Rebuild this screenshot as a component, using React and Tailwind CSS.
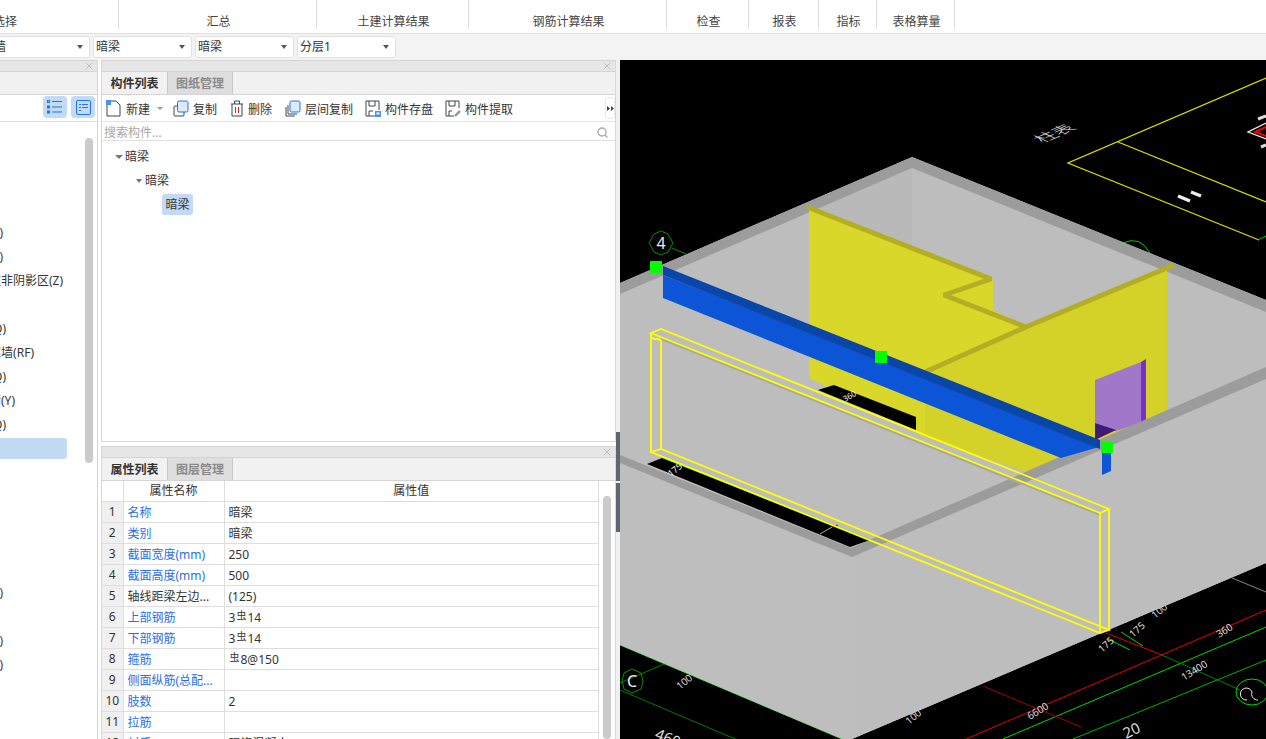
import React from "react";
import { X } from "lucide-react";

const ribbon = [
  { label: "选择", w: "w-[119px]", clip: true },
  { label: "汇总", w: "w-[198px]" },
  { label: "土建计算结果", w: "w-[152px]" },
  { label: "钢筋计算结果", w: "w-[198px]" },
  { label: "检查", w: "w-[82px]" },
  { label: "报表", w: "w-[70px]" },
  { label: "指标", w: "w-[58px]" },
  { label: "表格算量", w: "w-[78px]" },
];

const leftRows = [
  { text: "", w: "w-0" },
  { text: "", w: "w-0" },
  { text: "", w: "w-0" },
  { text: "剪力墙(Q)", w: "w-[3px]" },
  { text: "人防门框墙(J)", w: "w-[3px]" },
  { text: "暗柱非阴影区(Z)", w: "w-[63px]" },
  { text: "", w: "w-0" },
  { text: "砌体墙(Q)", w: "w-[6px]" },
  { text: "人防门框墙(RF)", w: "w-[34px]" },
  { text: "砌块墙(Q)", w: "w-[6px]" },
  { text: "预制墙(Y)", w: "w-[15px]" },
  { text: "保温墙(Q)", w: "w-[6px]" },
  { text: "", w: "w-0", selected: true },
  { text: "", w: "w-0" },
  { text: "", w: "w-0" },
  { text: "", w: "w-0" },
  { text: "", w: "w-0" },
  { text: "", w: "w-0" },
  { text: "过梁(G)", w: "w-[3px]" },
  { text: "", w: "w-0" },
  { text: "连梁(G)", w: "w-[3px]" },
  { text: "圈梁(B)", w: "w-[3px]" },
];

const propRows = [
  { no: 1, name: "名称", value: "暗梁", blue: true },
  { no: 2, name: "类别", value: "暗梁", blue: true },
  { no: 3, name: "截面宽度(mm)", value: "250", blue: true },
  { no: 4, name: "截面高度(mm)", value: "500", blue: true },
  { no: 5, name: "轴线距梁左边...", value: "(125)" },
  { no: 6, name: "上部钢筋", value: "3虫14", blue: true },
  { no: 7, name: "下部钢筋", value: "3虫14", blue: true },
  { no: 8, name: "箍筋", value: "虫8@150", blue: true },
  { no: 9, name: "侧面纵筋(总配...", value: "", blue: true },
  { no: 10, name: "肢数", value: "2", blue: true },
  { no: 11, name: "拉筋", value: "", blue: true },
  { no: 12, name: "材质", value: "现浇混凝土", blue: true },
];

// value text with the rebar mark lifted a little
function RebarValue({ value }) {
  const parts = value.split("虫");
  if (parts.length === 1) return value;
  return (
    <>
      {parts[0]}
      <span className="relative -top-[3px] mx-[1px] text-[10px]">虫</span>
      {parts[1]}
    </>
  );
}

function PanelHeader() {
  return (
    <div className="flex h-[12px] shrink-0 items-center justify-end border-y border-[#d4d4d4] bg-[#e6e6e6] pr-[2px]">
      <X size={12} strokeWidth={1} className="text-[#9a9a9a]" />
    </div>
  );
}

function Tabs({ first, second }) {
  return (
    <div className="flex h-[23px] shrink-0 border-b border-[#d4d4d4] bg-[#f1f1f1]">
      <div className="flex w-[65px] items-center justify-center pt-[2px] font-bold text-[#333]">{first}</div>
      <div className="flex w-[66px] items-center justify-center border-x border-[#c8c8c8] bg-[#dedede] pt-[2px] font-bold text-[#8a8a8a]">
        {second}
      </div>
    </div>
  );
}

function Dropdown({ text, w }) {
  return (
    <div className={`flex h-[22px] items-center justify-between overflow-hidden rounded-[3px] border border-[#e2e2e2] bg-white pl-[2px] pr-[6px] ${w}`}>
      <span className="whitespace-nowrap text-[#333]">{text}</span>
      <span className="h-0 w-0 border-x-[3px] border-t-[4px] border-x-transparent border-t-[#555]" />
    </div>
  );
}

function ToolButton({ icon, label, className }) {
  return (
    <div className={`flex items-center gap-[4px] ${className}`}>
      {icon}
      <span className="whitespace-nowrap pt-[3px] text-[#333]">{label}</span>
    </div>
  );
}

const NewIcon = (
  <svg width="16" height="17" viewBox="0 0 16 17" fill="none">
    <path d="M1 5v11h13V5l-4-4H5" stroke="#3d4654" strokeWidth="1" />
    <rect x="0" y="0" width="5" height="5" fill="#4d90ea" />
  </svg>
);
const CopyIcon = (
  <svg width="16" height="17" viewBox="0 0 16 17" fill="none">
    <rect x="1" y="6" width="10" height="10" rx="1" fill="#fff" stroke="#3d4654" />
    <rect x="4.5" y="1" width="10.5" height="11" rx="1.5" fill="#dceafc" stroke="#1f74e8" />
  </svg>
);
const DeleteIcon = (
  <svg width="14" height="17" viewBox="0 0 14 17" fill="none">
    <path d="M1 4h12M2 4v12h10V4M4.5 4V1h5v3" stroke="#3d4654" />
    <path d="M5.5 7v6M8.5 7v6" stroke="#e0241c" />
  </svg>
);
const FloorCopyIcon = (
  <svg width="16" height="17" viewBox="0 0 16 17" fill="none">
    <path d="M1 7v9h9M3 5v9h9" stroke="#3d4654" />
    <rect x="5" y="1" width="10" height="11" rx="1.5" fill="#dceafc" stroke="#1f74e8" />
  </svg>
);
const SaveIcon = (
  <svg width="16" height="17" viewBox="0 0 16 17" fill="none">
    <path d="M10 16H1V1h13v9" stroke="#3d4654" />
    <path d="M4 1v5h6V1M4 16v-5h4" stroke="#3d4654" />
    <rect x="10" y="11" width="6" height="6" fill="#4d90ea" />
    <rect x="11.5" y="12.5" width="3" height="2" fill="#fff" />
  </svg>
);
const PickIcon = (
  <svg width="16" height="17" viewBox="0 0 16 17" fill="none">
    <path d="M9 16H1V1h13v7" stroke="#3d4654" />
    <path d="M4 1v5h6V1M4 16v-5h3" stroke="#3d4654" />
    <path d="M10 16l5-5" stroke="#8a94a3" strokeWidth="2.4" />
  </svg>
);

// CAD view, drawn in page coordinates
function CadView() {
  return (
    <svg viewBox="620 60 646 679" className="block h-[679px] w-[646px]">
      <rect x="620" y="60" width="646" height="679" fill="#000" />

      {/* drawing lines behind the model, top right */}
      <g fill="none" stroke="#dcdc00" strokeWidth="1.3">
        <path d="M1266 78L1068 163L1259 240" />
        <path d="M1118 142L1266 202" />
      </g>
      <path d="M1258 240L1266 236" stroke="#0c0" fill="none" />
      <path d="M1266 123L1248 132L1266 139" stroke="#eee" strokeWidth="1.3" fill="none" />
      <path d="M1266 127L1255 132L1266 136" stroke="#e00" strokeWidth="2" fill="none" />
      <path d="M1258 119l8 -3M1261 147l5 -2" stroke="#ddd" strokeWidth="3" fill="none" />
      <text transform="matrix(0.9 -0.38 0.8 0.36 1043 143)" fill="#eee" fontSize="19" fontWeight="200">柱表</text>
      <path d="M1178 196l12 5M1191 192l10 4" stroke="#eee" strokeWidth="3.5" fill="none" />
      <path d="M1123 243Q1140 235 1150 253" stroke="#0c0" fill="none" />
      <path d="M672 248L686 254" stroke="#0a8a0a" fill="none" />
      <polygon points="661,231 668,234 673,243 668,252 661,255 654,252 649,243 654,234" fill="none" stroke="#0a8a0a" />
      <text x="661" y="249" textAnchor="middle" fill="#eee" fontSize="16">4</text>

      {/* CAD below the model */}
      <g fill="none">
        <path d="M966 739L1266 610" stroke="#e60000" />
        <path d="M1003 739L1266 627" stroke="#00d800" />
        <path d="M1073 739L1266 660" stroke="#00b000" />
        <path d="M983 686L1081 727" stroke="#a00000" />
        <path d="M1106 633L1162 655" stroke="#e60000" />
        <path d="M1121 632L1143 646M1108 639L1130 650" stroke="#00d800" />
        <path d="M1162 655L1240 690" stroke="#008000" />
        <path d="M620 645L842 739" stroke="#00e000" />
        <path d="M620 690L735 739" stroke="#007a00" />
        <path d="M620 683L664 664" stroke="#008000" />
        <path d="M1232 578L1266 592" stroke="#888" />
        <ellipse cx="1252" cy="692" rx="16" ry="13" stroke="#00d800" />
      </g>
      <polygon points="632,669 641,673 643,681 641,689 632,693 624,689 622,681 624,673" fill="none" stroke="#0a8a0a" />
      <text x="632" y="687" textAnchor="middle" fill="#eee" fontSize="16">C</text>
      <g fill="#ddd" fontSize="10">
        <text transform="translate(1102 653) rotate(-42)">175</text>
        <text transform="translate(1133 638) rotate(-42)">175</text>
        <text transform="translate(1219 638) rotate(-32)">360</text>
        <text transform="translate(1184 681) rotate(-32)">13400</text>
        <text transform="translate(1030 720) rotate(-32)">6600</text>
        <text transform="translate(680 690) rotate(-40)">100</text>
        <text transform="translate(909 725) rotate(-40)">100</text>
        <text transform="translate(1155 619) rotate(-40)">100</text>
      </g>
      <text transform="translate(654 738) rotate(22)" fill="#ddd" fontSize="15">4600</text>
      <text transform="translate(1126 739) rotate(-25)" fill="#ddd" fontSize="15">20</text>
      <path d="M1247 700a6 6 0 1 1 5 -8a6 6 0 0 0 6 8" stroke="#eee" fill="none" />

      {/* model body */}
      <polygon points="912,157 1266,300 1266,563 852,739 842,739 620,645 620,283" fill="#bebebe" />
      <polygon points="912,168 620,294 620,453 851,548 851,739 852,739 1266,563 1266,312" fill="#bdbdbd" />
      <polygon points="912,168 809,212 809,330 912,300" fill="#b9b9b9" />
      <polygon points="912,157 1266,300 1266,312 912,168 620,294 620,283" fill="#9c9c9c" />

      {/* yellow walls */}
      <polygon points="809,207 993,279 993,310 1026,327 1026,400 925,437 916,432 809,378" fill="#d9d72a" />
      <polygon points="1026,327 1167,266 1167,420 1036,475 925,437 925,372" fill="#d4d228" />
      <g fill="none" stroke="#b3ae22" strokeWidth="5" strokeLinejoin="bevel">
        <path d="M807 207L991 279L944 295L1026 327L1174 265" />
        <path d="M1026 327L925 372" />
      </g>

      {/* door */}
      <polygon points="1095,380 1141,362 1141,423 1116,431 1095,423" fill="#a077c9" />
      <polygon points="1141,362 1146,359 1146,422 1141,423" fill="#7a2fc8" />
      <polygon points="1095,423 1116,430 1095,440" fill="#3f1a78" />

      {/* black slot under the beam */}
      <polygon points="818,390 834,385 916,417 916,430" fill="#000" />
      <text transform="translate(845 402) rotate(-30)" fill="#eee" fontSize="8">360</text>

      {/* front wall band with its slot */}
      <polygon points="620,455 851,548 1266,367 1266,379 852,557 620,463" fill="#9c9c9c" />
      <polygon points="647,464 662,458 870,540 850,547" fill="#000" />
      <path d="M662 457L870 540" stroke="#00e000" strokeWidth="1.4" fill="none" />
      <path d="M820 534L832 527" stroke="#aaa" fill="none" />
      <path d="M832 527L838 525" stroke="#c00" fill="none" />
      <text transform="translate(671 477) rotate(-40)" fill="#eee" fontSize="9">175</text>

      {/* beam */}
      <polygon points="663,275 1099,447 1061,458 663,298" fill="#0b55d6" />
      <polygon points="663,266 1100,440 1100,449 663,275" fill="#0a45a8" />
      <polygon points="1102,453 1111,453 1111,471 1102,475" fill="#0b55d6" />
      <rect x="650" y="261" width="12" height="12" fill="#00ff00" />
      <rect x="875" y="351" width="12" height="12" fill="#00ff00" />
      <rect x="1101" y="442" width="12" height="11" fill="#00ff00" />

      {/* selected wireframe */}
      <polygon points="661,336 1100,513 1100,516 661,340" fill="#a8a8a8" />
      <g fill="none" stroke="#ffff00" strokeWidth="1.8">
        <path d="M651 333L661 329L1109 509L1100 513L651 333Z" />
        <path d="M651 452L661 449L1109 630L1100 633Z" />
        <path d="M651 333V452M661 340V449M1100 513V633M1109 509V630" />
        <path d="M651 338L661 340" />
      </g>
    </svg>
  );
}

const App = () => {
  return (
    <div className="flex h-[739px] w-[1266px] flex-col overflow-hidden bg-white font-['Noto_Sans','Noto_Sans_CJK_SC',sans-serif] text-[12px] leading-none">
      {/* Ribbon */}
      <div className="flex h-[34px] shrink-0 border-b border-[#e0e0e0] bg-white">
        {ribbon.map((r) => (
          <div
            key={r.label}
            className={`flex h-[29px] items-end border-r border-[#dcdcdc] pb-[1px] text-[#444] ${r.w} ${r.clip ? "justify-start" : "justify-center pl-[2px]"}`}
          >
            {r.clip ? <span className="-ml-[7px]">{r.label}</span> : r.label}
          </div>
        ))}
      </div>

      {/* Dropdown row */}
      <div className="flex h-[26px] shrink-0 items-center gap-[3px] overflow-hidden bg-[#f3f3f3]">
        <Dropdown text="墙" w="w-[92px] -ml-[2px] rounded-l-none [&>span:first-child]:-ml-[7px]" />
        <Dropdown text="暗梁" w="w-[99px]" />
        <Dropdown text="暗梁" w="w-[99px]" />
        <Dropdown text="分层1" w="w-[99px]" />
      </div>

      <div className="flex min-h-0 flex-1">
        {/* Left panel */}
        <div className="flex w-[98px] shrink-0 flex-col overflow-hidden border-r border-[#d4d4d4] bg-white">
          <PanelHeader />
          <div className="h-[23px] shrink-0 border-b border-[#d4d4d4] bg-[#f1f1f1]" />
          <div className="flex h-[27px] shrink-0 items-center justify-end gap-[4px] border-b border-[#dedede] pb-[2px] pr-[2px]">
            <div className="flex h-[22px] w-[24px] items-center justify-center rounded-[4px] bg-[#c2dbf3]">
              <svg width="16" height="14" viewBox="0 0 16 14" fill="none" stroke="#1f74e8">
                <rect x="0.5" y="0.5" width="2" height="2" />
                <rect x="0.5" y="6" width="2" height="2" />
                <rect x="0.5" y="11" width="2" height="2" />
                <path d="M5 1.5h10M5 7h10M5 12h10" />
              </svg>
            </div>
            <div className="flex h-[22px] w-[24px] items-center justify-center rounded-[4px] bg-[#c2dbf3]">
              <svg width="15" height="15" viewBox="0 0 15 15" fill="none" stroke="#1f74e8">
                <rect x="0.5" y="0.5" width="14" height="14" rx="1.5" />
                <path d="M3 4.5h2M6 4.5h6M3 7.5h2M6 7.5h6M3 10.5h2" />
              </svg>
            </div>
          </div>
          <div className="flex min-h-0 flex-1">
            <div className="w-[85px] shrink-0 pt-[28px]">
              {leftRows.map((row, i) => (
                <div key={i} className="h-[24px]">
                  {row.selected ? (
                    <div className="h-[21px] w-[67px] rounded-r-[3px] bg-[#c2daf3]" />
                  ) : (
                    <div className={`flex h-[21px] items-center justify-end whitespace-nowrap text-[#333] ${row.w}`}>
                      {row.text}
                    </div>
                  )}
                </div>
              ))}
            </div>
            <div className="pt-[16px]">
              <div className="h-[325px] w-[8px] rounded-[4px] bg-[#cbcbcb]" />
            </div>
          </div>
        </div>

        <div className="w-[3px] shrink-0 bg-white" />

        {/* Middle column */}
        <div className="flex w-[515px] shrink-0 flex-col">
          <div className="flex h-[382px] shrink-0 flex-col border-x border-b border-[#d8d8d8] bg-white">
            <PanelHeader />
            <Tabs first="构件列表" second="图纸管理" />
            <div className="flex h-[27px] shrink-0 items-center border-b border-[#e4e4e4] pl-[4px]">
              <ToolButton icon={NewIcon} label="新建" className="w-[51px]" />
              <span className="mr-[10px] h-0 w-0 border-x-[3px] border-t-[3px] border-x-transparent border-t-[#999]" />
              <ToolButton icon={CopyIcon} label="复制" className="w-[57px]" />
              <ToolButton icon={DeleteIcon} label="删除" className="w-[55px]" />
              <ToolButton icon={FloorCopyIcon} label="层间复制" className="w-[80px]" />
              <ToolButton icon={SaveIcon} label="构件存盘" className="w-[80px]" />
              <ToolButton icon={PickIcon} label="构件提取" className="w-[90px]" />
              <div className="ml-auto flex h-[22px] w-[10px] items-center justify-center rounded-[3px] border border-[#e8e8e8]">
                <svg width="7" height="5" viewBox="0 0 7 5" fill="#444">
                  <path d="M0 0l3 2.5L0 5zM4 0l3 2.5L4 5z" />
                </svg>
              </div>
            </div>
            <div className="flex h-[19px] shrink-0 items-center justify-between border-b border-[#e0e0e0] pl-[2px] pr-[7px] pt-[3px] text-[#a8a8a8]">
              搜索构件...
              <svg width="11" height="11" viewBox="0 0 11 11" fill="none" stroke="#a8a8a8" strokeWidth="1.3">
                <circle cx="5" cy="5" r="4" />
                <path d="M8 8l2.5 2.5" />
              </svg>
            </div>
            <div className="flex flex-col items-start pl-[13px] pt-[6px] text-[#333]">
              <div className="flex h-[20px] items-center gap-[2px]">
                <span className="h-0 w-0 border-x-[4px] border-t-[4px] border-x-transparent border-t-[#777]" />
                暗梁
              </div>
              <div className="ml-[21px] mt-[4px] flex h-[20px] items-center gap-[3px]">
                <span className="h-0 w-0 border-x-[3px] border-t-[4px] border-x-transparent border-t-[#777]" />
                暗梁
              </div>
              <div className="ml-[47px] mt-[3px] flex h-[21px] w-[31px] items-center justify-center rounded-[3px] bg-[#c2daf3]">
                暗梁
              </div>
            </div>
          </div>

          <div className="h-[4px] shrink-0" />

          <div className="flex min-h-0 flex-1 flex-col overflow-hidden border-x border-[#d8d8d8] bg-white">
            <PanelHeader />
            <Tabs first="属性列表" second="图层管理" />
            <div className="flex min-h-0 flex-1">
              <table className="h-fit w-[497px] shrink-0 table-fixed border-collapse text-[#333]">
                <colgroup>
                  <col className="w-[21px]" />
                  <col className="w-[101px]" />
                  <col />
                </colgroup>
                <tbody>
                  <tr className="h-[20px] text-center">
                    <td className="border-r border-b border-[#dedede]" />
                    <td className="border-r border-b border-[#dedede] pt-[1px]">属性名称</td>
                    <td className="border-r border-b border-[#dedede] pt-[1px]">属性值</td>
                  </tr>
                  {propRows.map((row) => (
                    <tr key={row.no} className="h-[21px]">
                      <td className="border-r border-b border-[#dedede] bg-[#f0f0f0] pt-[1px] text-center">{row.no}</td>
                      <td className={`border-r border-b border-[#dedede] pl-[4px] pt-[2px] ${row.blue ? "text-[#2a6fe0]" : ""}`}>
                        {row.name}
                      </td>
                      <td className="border-r border-b border-[#dedede] pl-[4px] pt-[2px]">
                        <RebarValue value={row.value} />
                      </td>
                    </tr>
                  ))}
                </tbody>
              </table>
              <div className="flex flex-1 justify-center pt-[15px]">
                <div className="h-full w-[8px] rounded-[4px] bg-[#cbcbcb]" />
              </div>
            </div>
          </div>
        </div>

        {/* Splitter */}
        <div className="flex w-[4px] shrink-0 flex-col bg-[#f0f0f0] pt-[372px]">
          <div className="h-[49px] bg-[#5c6772]" />
          <div className="h-[2px]" />
          <div className="h-[49px] bg-[#5c6772]" />
        </div>

        {/* CAD view */}
        <div className="min-w-0 flex-1 overflow-hidden bg-black">
          <CadView />
        </div>
      </div>
    </div>
  );
};

export default App;
